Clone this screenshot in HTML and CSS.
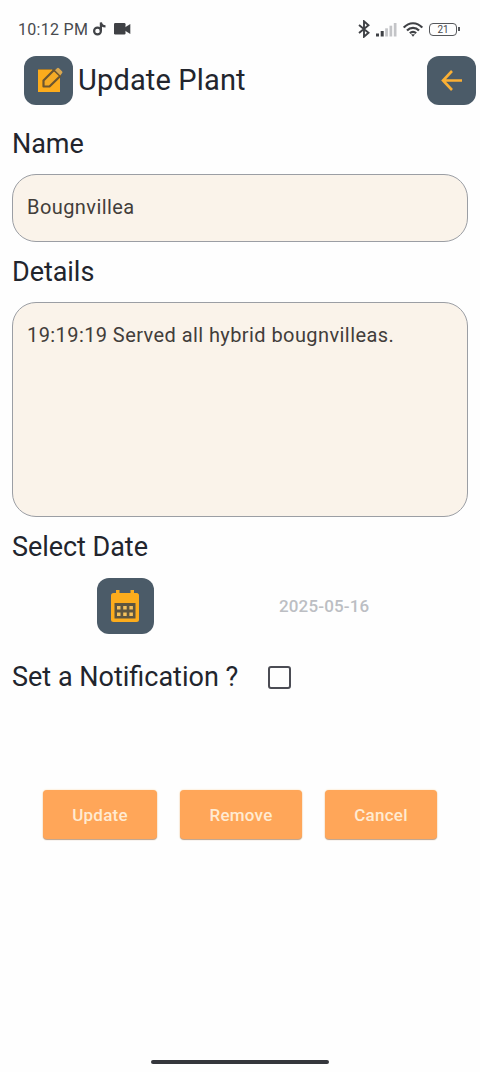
FILE: index.html
```
<!DOCTYPE html>
<html lang="en">
<head>
<meta charset="utf-8">
<title>Update Plant</title>
<link rel="stylesheet" href="styles.css">
</head>
<body>
<div class="screen">
  <div class="status">
    <span class="clock">10:12 PM</span>
    <svg class="note" width="13" height="14" viewBox="0 0 13 14" fill="none" stroke="#414347" stroke-width="2.200"><circle cx="4.500" cy="9" r="3.400"/><path d="M7.900 9V.5C8.300 3.400 9.600 4.400 12.500 4.400"/></svg>
    <svg class="video" width="17" height="12" viewBox="0 0 17 12" fill="#3f4145"><rect width="11.500" height="11.500" rx="1.200"/><path d="M10 5L16.300 1v10L10 7z"/></svg>
    <div class="signals">
      <svg width="12" height="18" viewBox="0 0 12 18" fill="none" stroke="#3f4145" stroke-width="1.900"><path d="M1 5l9.500 7.700L6 16.700V1.300l4.500 4L1 13"/></svg>
      <svg width="21" height="15" viewBox="0 0 21 15"><g fill="#3f4145"><rect y="11.500" width="3" height="3"/><rect x="4.700" y="9" width="3" height="5.500"/></g><g fill="#c3c4c7"><rect x="9.200" y="6.300" width="2.700" height="8.200"/><rect x="13.500" y="3.700" width="2.700" height="10.800"/><rect x="17.800" y="1" width="2.700" height="13.500"/></g></svg>
      <svg class="wifi" width="20" height="15" viewBox="0 0 20 15" fill="none" stroke="#3f4145" stroke-width="2.200"><path d="M.8 5.600C6-.2 14-.2 19.200 5.600M4 8.600c3.400-3.700 8.600-3.700 12 0M6.900 11.300c1.700-1.800 4.500-1.800 6.200 0"/><path d="M8 12.300h4L10 14.800z" fill="#3f4145" stroke="none"/></svg>
      <div class="battery">21</div>
    </div>
  </div>

  <header class="header">
    <div class="tile">
      <svg width="28" height="28" viewBox="0 0 28 28"><path d="M3 2.500h14l8 8V25H3z" fill="#fcac1c"/><path d="M8.500 19.500v-6L19 3l6.300 6L14.500 19.500z" fill="#f5ab25" stroke="#6b5530" stroke-width="2.200" stroke-linejoin="round"/><path d="M20 3.300L22 1.300q1-1 2 0L27 4.300q1 1 0 2L25.300 8.500z" fill="#d9a850"/><path d="M3 2.500h13" stroke="#a87a2a"/></svg>
    </div>
    <h1 class="title">Update Plant</h1>
    <div class="tile back">
      <svg width="24" height="24" viewBox="0 0 24 24" fill="none" stroke="#fbb034" stroke-width="2.600"><path d="M22 11.500H3M12 2L3 11.500l9 9.500"/></svg>
    </div>
  </header>

  <main class="form">
    <div class="label">Name</div>
    <div class="field">Bougnvillea</div>
    <div class="label">Details</div>
    <div class="field details">19:19:19 Served all hybrid bougnvilleas.</div>
    <div class="label date-label">Select Date</div>
    <div class="date-row">
      <div class="tile calendar">
        <svg width="30" height="34" viewBox="0 0 30 34"><rect x="1" y="4" width="28" height="29" rx="2.500" fill="#fcac1c"/><path d="M6 5V1h3.500v4M20.500 5V1H24v4" fill="#fcac1c"/><path d="M4.500 14h21v15.500h-21z" fill="#5d5540"/><g fill="#f4c15c"><rect x="7" y="17" width="3.500" height="3.500"/><rect x="13.200" y="17" width="3.500" height="3.500"/><rect x="19.400" y="17" width="3.500" height="3.500"/><rect x="7" y="23.500" width="3.500" height="3.500"/><rect x="13.200" y="23.500" width="3.500" height="3.500"/><rect x="19.400" y="23.500" width="3.500" height="3.500"/></g></svg>
      </div>
      <span class="date">2025-05-16</span>
    </div>
    <div class="notify"><span class="notify-text">Set a Notification ?</span><span class="checkbox"></span></div>
    <div class="actions">
      <div class="btn update">Update</div>
      <div class="btn remove">Remove</div>
      <div class="btn cancel">Cancel</div>
    </div>
  </main>
  <div class="home"></div>
</div>
</body>
</html>
```
FILE: styles.css
```
* { box-sizing: border-box; }
body { margin: 0; background: #fefefe; font-family: Roboto, "Liberation Sans", sans-serif; color: #22252d; }
.screen { width: 480px; height: 1072px; display: flex; flex-direction: column; overflow: hidden; }
svg { display: block; flex: none; }
.status { height: 56px; padding: 2px 23px 0 18px; display: flex; align-items: center; color: #484a4e; }
.clock { font-size: 16px; width: 71px; margin-right: 4px; white-space: nowrap; letter-spacing: .3px; }
.note { margin-right: 8px; }
.signals { margin-left: auto; display: flex; align-items: center; }
.signals svg { margin-right: 6px; }
.signals svg:first-child { margin-left: -1px; }
.battery { position: relative; width: 28px; height: 13px; border: 1.500px solid #55575b; border-radius: 4px; font-size: 10px; line-height: 11px; text-align: center; }
.battery::after { content: ""; position: absolute; right: -4px; top: 3px; width: 2px; height: 4px; background: #55575b; }
.header { height: 49px; display: flex; align-items: center; padding: 0 4px 0 24px; }
.tile { width: 49px; height: 49px; border-radius: 12px; background: #4b5b68; display: flex; align-items: center; justify-content: center; flex: none; }
.title { margin: 0 0 2px 5px; font-size: 29px; font-weight: 400; line-height: 32px; letter-spacing: .15px; }
.back { margin-left: auto; }
.form { padding: 0 12px; display: flex; flex-direction: column; }
.label { font-size: 27px; line-height: 30px; height: 60px; padding-top: 15px; letter-spacing: -.05px; }
.form .label:first-child { height: 69px; padding-top: 24px; }
.field { height: 68px; border: 1.500px solid #9b9ea4; border-radius: 24px; background: #faf3ea; padding: 21px 14px; font-size: 20px; line-height: 22px; letter-spacing: .42px; color: #423d3a; }
.details { height: 215px; }
.date-label { height: 61px; }
.date-row { height: 56px; display: flex; align-items: center; padding-left: 85px; }
.calendar { width: 57px; height: 56px; padding-right: 1px; }
.date { margin-left: 125px; font-size: 17px; font-weight: 500; letter-spacing: .15px; color: #bcbec3; }
.notify { display: flex; align-items: center; height: 30px; margin-top: 28px; font-size: 27px; }
.notify-text { width: 256px; }
.checkbox { width: 23px; height: 23px; border: 2px solid #4b4c54; border-radius: 3px; }
.actions { display: flex; gap: 23px; margin: 98px 0 0 31px; }
.btn { height: 49px; border-radius: 4px; background: #ffa659; box-shadow: 0 1px 1px #bca08a, 0 0 2px #ffd9a5; color: #ffebd2; font-size: 17px; font-weight: 500; line-height: 50px; text-align: center; letter-spacing: .25px; }
.update { width: 114px; }
.remove { width: 122px; }
.cancel { width: 112px; }
.home { width: 178px; height: 4px; border-radius: 2px; background: #35373c; margin: auto auto 8px 151px; }
```
